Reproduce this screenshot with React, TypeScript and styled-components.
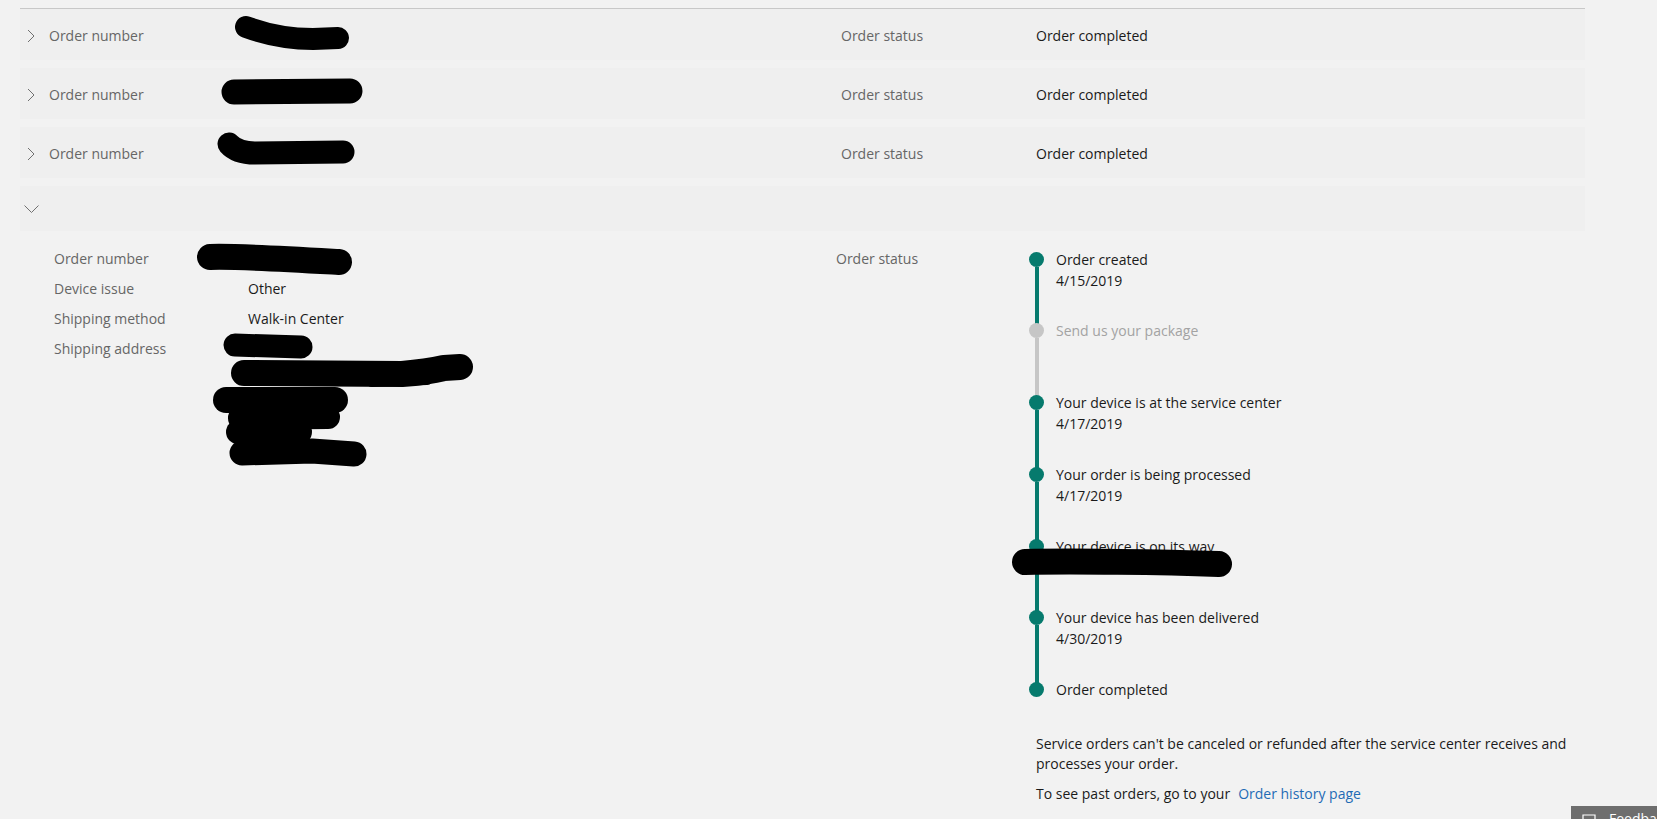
import React from "react";
import styled, { createGlobalStyle } from "styled-components";

const GlobalStyle = createGlobalStyle`
  html, body { margin: 0; padding: 0; background: #f2f2f2; overflow: hidden; }
  body {
    font-family: "Open Sans", "Noto Sans", sans-serif;
    font-size: 14px;
    color: #1a1a1a;
  }
`;

const Page = styled.main`
  width: 1565px;
  padding: 8px 0 0 20px;
`;

const OrderList = styled.section`
  border-top: 1px solid #c8c8c8;
  display: flex;
  flex-direction: column;
  gap: 8px;
`;

const OrderRow = styled.div`
  box-sizing: border-box;
  display: grid;
  grid-template-columns: 29px 166px 626px 195px 1fr;
  align-items: center;
  height: 51px;
  padding-top: 3px;
  background: #efefef;
`;

const Toggle = styled.span`
  box-sizing: border-box;
  width: 29px;
  display: flex;
  justify-content: center;
  align-items: center;
  padding-right: 7px;
`;

const Label = styled.span`
  color: #666666;
  line-height: 20px;
`;

const Value = styled.span`
  color: #1a1a1a;
  line-height: 20px;
`;

const Scribble = styled.svg<{ $offset?: number; $lift?: number }>`
  display: block;
  overflow: visible;
  margin-left: ${(p) => p.$offset ?? 0}px;
  margin-top: ${(p) => -(p.$lift ?? 0)}px;
  align-self: start;
`;

const ExpandedOrder = styled.article`
  display: flex;
  flex-direction: column;
`;

const ExpandedHeader = styled.div`
  height: 45px;
  display: flex;
  align-items: center;
  background: #efefef;
`;

const Details = styled.div`
  display: grid;
  grid-template-columns: 782px 193px 1fr;
  padding: 13px 0 0 34px;
  align-items: start;
`;

const InfoList = styled.dl`
  margin: 0;
  display: grid;
  grid-template-columns: 194px 1fr;
  align-items: start;
  line-height: 30px;
`;

const InfoLabel = styled.dt`
  color: #666666;
  height: 30px;
`;

const InfoValue = styled.dd`
  margin: 0;
  color: #1a1a1a;
  height: 30px;
`;

const StatusLabel = styled.div`
  color: #666666;
  line-height: 30px;
`;

const StatusColumn = styled.div`
  display: flex;
  flex-direction: column;
`;

const Timeline = styled.ol`
  list-style: none;
  margin: 4.5px 0 0;
  padding: 0;
`;

const Step = styled.li<{ $last?: boolean }>`
  position: relative;
  display: grid;
  grid-template-columns: 15px 1fr;
  column-gap: 12px;
  height: ${(p) => (p.$last ? "auto" : "71.8px")};
`;

const Rail = styled.div`
  display: flex;
  flex-direction: column;
  align-items: center;
`;

const Dot = styled.span<{ $done: boolean }>`
  position: relative;
  z-index: 1;
  flex: none;
  width: 15px;
  height: 15px;
  margin-top: 3px;
  border-radius: 50%;
  background: ${(p) => (p.$done ? "#067a6d" : "#c6c6c6")};
`;

const Connector = styled.span<{ $done: boolean }>`
  flex: 1;
  width: 4px;
  margin-bottom: -10px;
  background: ${(p) => (p.$done ? "#067a6d" : "#c6c6c6")};
`;

const StepText = styled.div<{ $done: boolean }>`
  line-height: 21px;
  color: ${(p) => (p.$done ? "#1a1a1a" : "#a3a3a3")};
`;

const StepLine = styled.div``;

const StepRedaction = styled.svg`
  position: absolute;
  z-index: 2;
  left: -18px;
  top: 13px;
  overflow: visible;
`;

const Note = styled.div`
  margin: 33.5px 0 0 7px;
  width: 560px;
  line-height: 20px;
  color: #1a1a1a;
`;

const NoteText = styled.p`
  margin: 0 0 10px;
`;

const Link = styled.a`
  color: #1f6bb5;
  text-decoration: none;
  margin-left: 8px;
`;

const FeedbackButton = styled.button`
  position: fixed;
  left: 1571px;
  top: 806px;
  width: 120px;
  height: 40px;
  border: none;
  background: #6e6e6e;
  color: #ffffff;
  display: flex;
  align-items: flex-start;
  gap: 13px;
  padding: 3px 0 0 11px;
  font-family: "Open Sans", "Noto Sans", sans-serif;
  font-size: 14px;
  line-height: 20px;
`;

const FeedbackIcon = styled.svg`
  flex: none;
  margin-top: 5px;
`;

function ChevronRight() {
  return (
    <svg width="8" height="14" viewBox="0 0 8 14">
      <path d="M1 1 L7 7 L1 13" fill="none" stroke="#707070" strokeWidth="1" />
    </svg>
  );
}

function ChevronDown() {
  return (
    <svg width="15" height="8" viewBox="0 0 15 8">
      <path d="M0.5 0.5 L7.5 7.5 L14.5 0.5" fill="none" stroke="#707070" strokeWidth="1" />
    </svg>
  );
}

const ink = { fill: "none", stroke: "#000", strokeLinecap: "round" as const, strokeLinejoin: "round" as const };

const rowScribbles = [
  "M31 18 C 50 25, 75 30, 98 30 L 123 29",
  "M19 24 L 135 23",
  "M14 17 Q 22 26 40 26 L 128 25",
];
const rowWidths = [22, 25, 23];

function RowScribble({ index }: { index: number }) {
  return (
    <Scribble $lift={3} width="160" height="51" viewBox="0 0 160 51">
      <path d={rowScribbles[index]} {...ink} strokeWidth={rowWidths[index]} />
    </Scribble>
  );
}

function NumberScribble() {
  return (
    <Scribble $offset={-51} width="160" height="30" viewBox="0 0 160 30">
      <path d="M13 13 C 40 12, 90 15, 142 18" {...ink} strokeWidth="26" />
    </Scribble>
  );
}

function AddressScribble() {
  return (
    <Scribble $offset={-36} width="265" height="135" viewBox="0 0 265 135">
      <path d="M23 11 L 89 13" {...ink} strokeWidth="23" />
      <path d="M32 39 L 190 40 Q 215 38 232 34 L 248 33" {...ink} strokeWidth="26" />
      <path d="M160 47 L 215 45" {...ink} strokeWidth="12" />
      <path d="M14 66 L 123 66" {...ink} strokeWidth="26" />
      <path d="M28 84 L 116 83" {...ink} strokeWidth="24" />
      <path d="M26 98 L 88 98" {...ink} strokeWidth="24" />
      <path d="M30 119 L 100 117 L 142 120" {...ink} strokeWidth="25" />
    </Scribble>
  );
}

type StepData = { title: string; date?: string; done: boolean; redacted?: boolean };

const steps: StepData[] = [
  { title: "Order created", date: "4/15/2019", done: true },
  { title: "Send us your package", done: false },
  { title: "Your device is at the service center", date: "4/17/2019", done: true },
  { title: "Your order is being processed", date: "4/17/2019", done: true },
  { title: "Your device is on its way", done: true, redacted: true },
  { title: "Your device has been delivered", date: "4/30/2019", done: true },
  { title: "Order completed", done: true },
];

export default function App() {
  return (
    <>
      <GlobalStyle />
      <Page>
        <OrderList>
          {[0, 1, 2].map((i) => (
            <OrderRow key={i}>
              <Toggle>
                <ChevronRight />
              </Toggle>
              <Label>Order number</Label>
              <RowScribble index={i} />
              <Label>Order status</Label>
              <Value>Order completed</Value>
            </OrderRow>
          ))}
          <ExpandedOrder>
            <ExpandedHeader>
              <Toggle>
                <ChevronDown />
              </Toggle>
            </ExpandedHeader>
            <Details>
              <InfoList>
                <InfoLabel>Order number</InfoLabel>
                <InfoValue>
                  <NumberScribble />
                </InfoValue>
                <InfoLabel>Device issue</InfoLabel>
                <InfoValue>Other</InfoValue>
                <InfoLabel>Shipping method</InfoLabel>
                <InfoValue>Walk-in Center</InfoValue>
                <InfoLabel>Shipping address</InfoLabel>
                <InfoValue>
                  <AddressScribble />
                </InfoValue>
              </InfoList>
              <StatusLabel>Order status</StatusLabel>
              <StatusColumn>
                <Timeline>
                  {steps.map((s, i) => {
                    const last = i === steps.length - 1;
                    return (
                      <Step key={s.title} $last={last}>
                        <Rail>
                          <Dot $done={s.done} />
                          {!last && <Connector $done={s.done} />}
                        </Rail>
                        <StepText $done={s.done}>
                          <StepLine>{s.title}</StepLine>
                          {s.date && <StepLine>{s.date}</StepLine>}
                        </StepText>
                        {s.redacted && (
                          <StepRedaction width="222" height="28" viewBox="0 0 222 28">
                            <path d="M14 13 C 60 12, 150 13, 208 15" {...ink} strokeWidth="26" />
                          </StepRedaction>
                        )}
                      </Step>
                    );
                  })}
                </Timeline>
                <Note>
                  <NoteText>
                    Service orders can't be canceled or refunded after the service center receives and
                    processes your order.
                  </NoteText>
                  <NoteText>
                    To see past orders, go to your
                    <Link href="#">Order history page</Link>
                  </NoteText>
                </Note>
              </StatusColumn>
            </Details>
          </ExpandedOrder>
        </OrderList>
      </Page>
      <FeedbackButton>
        <FeedbackIcon width="14" height="14" viewBox="0 0 14 14">
          <path d="M1 1 H13 V10 H6 L3 13 V10 H1 Z" fill="none" stroke="#fff" strokeWidth="1.2" />
        </FeedbackIcon>
        Feedback
      </FeedbackButton>
    </>
  );
}
